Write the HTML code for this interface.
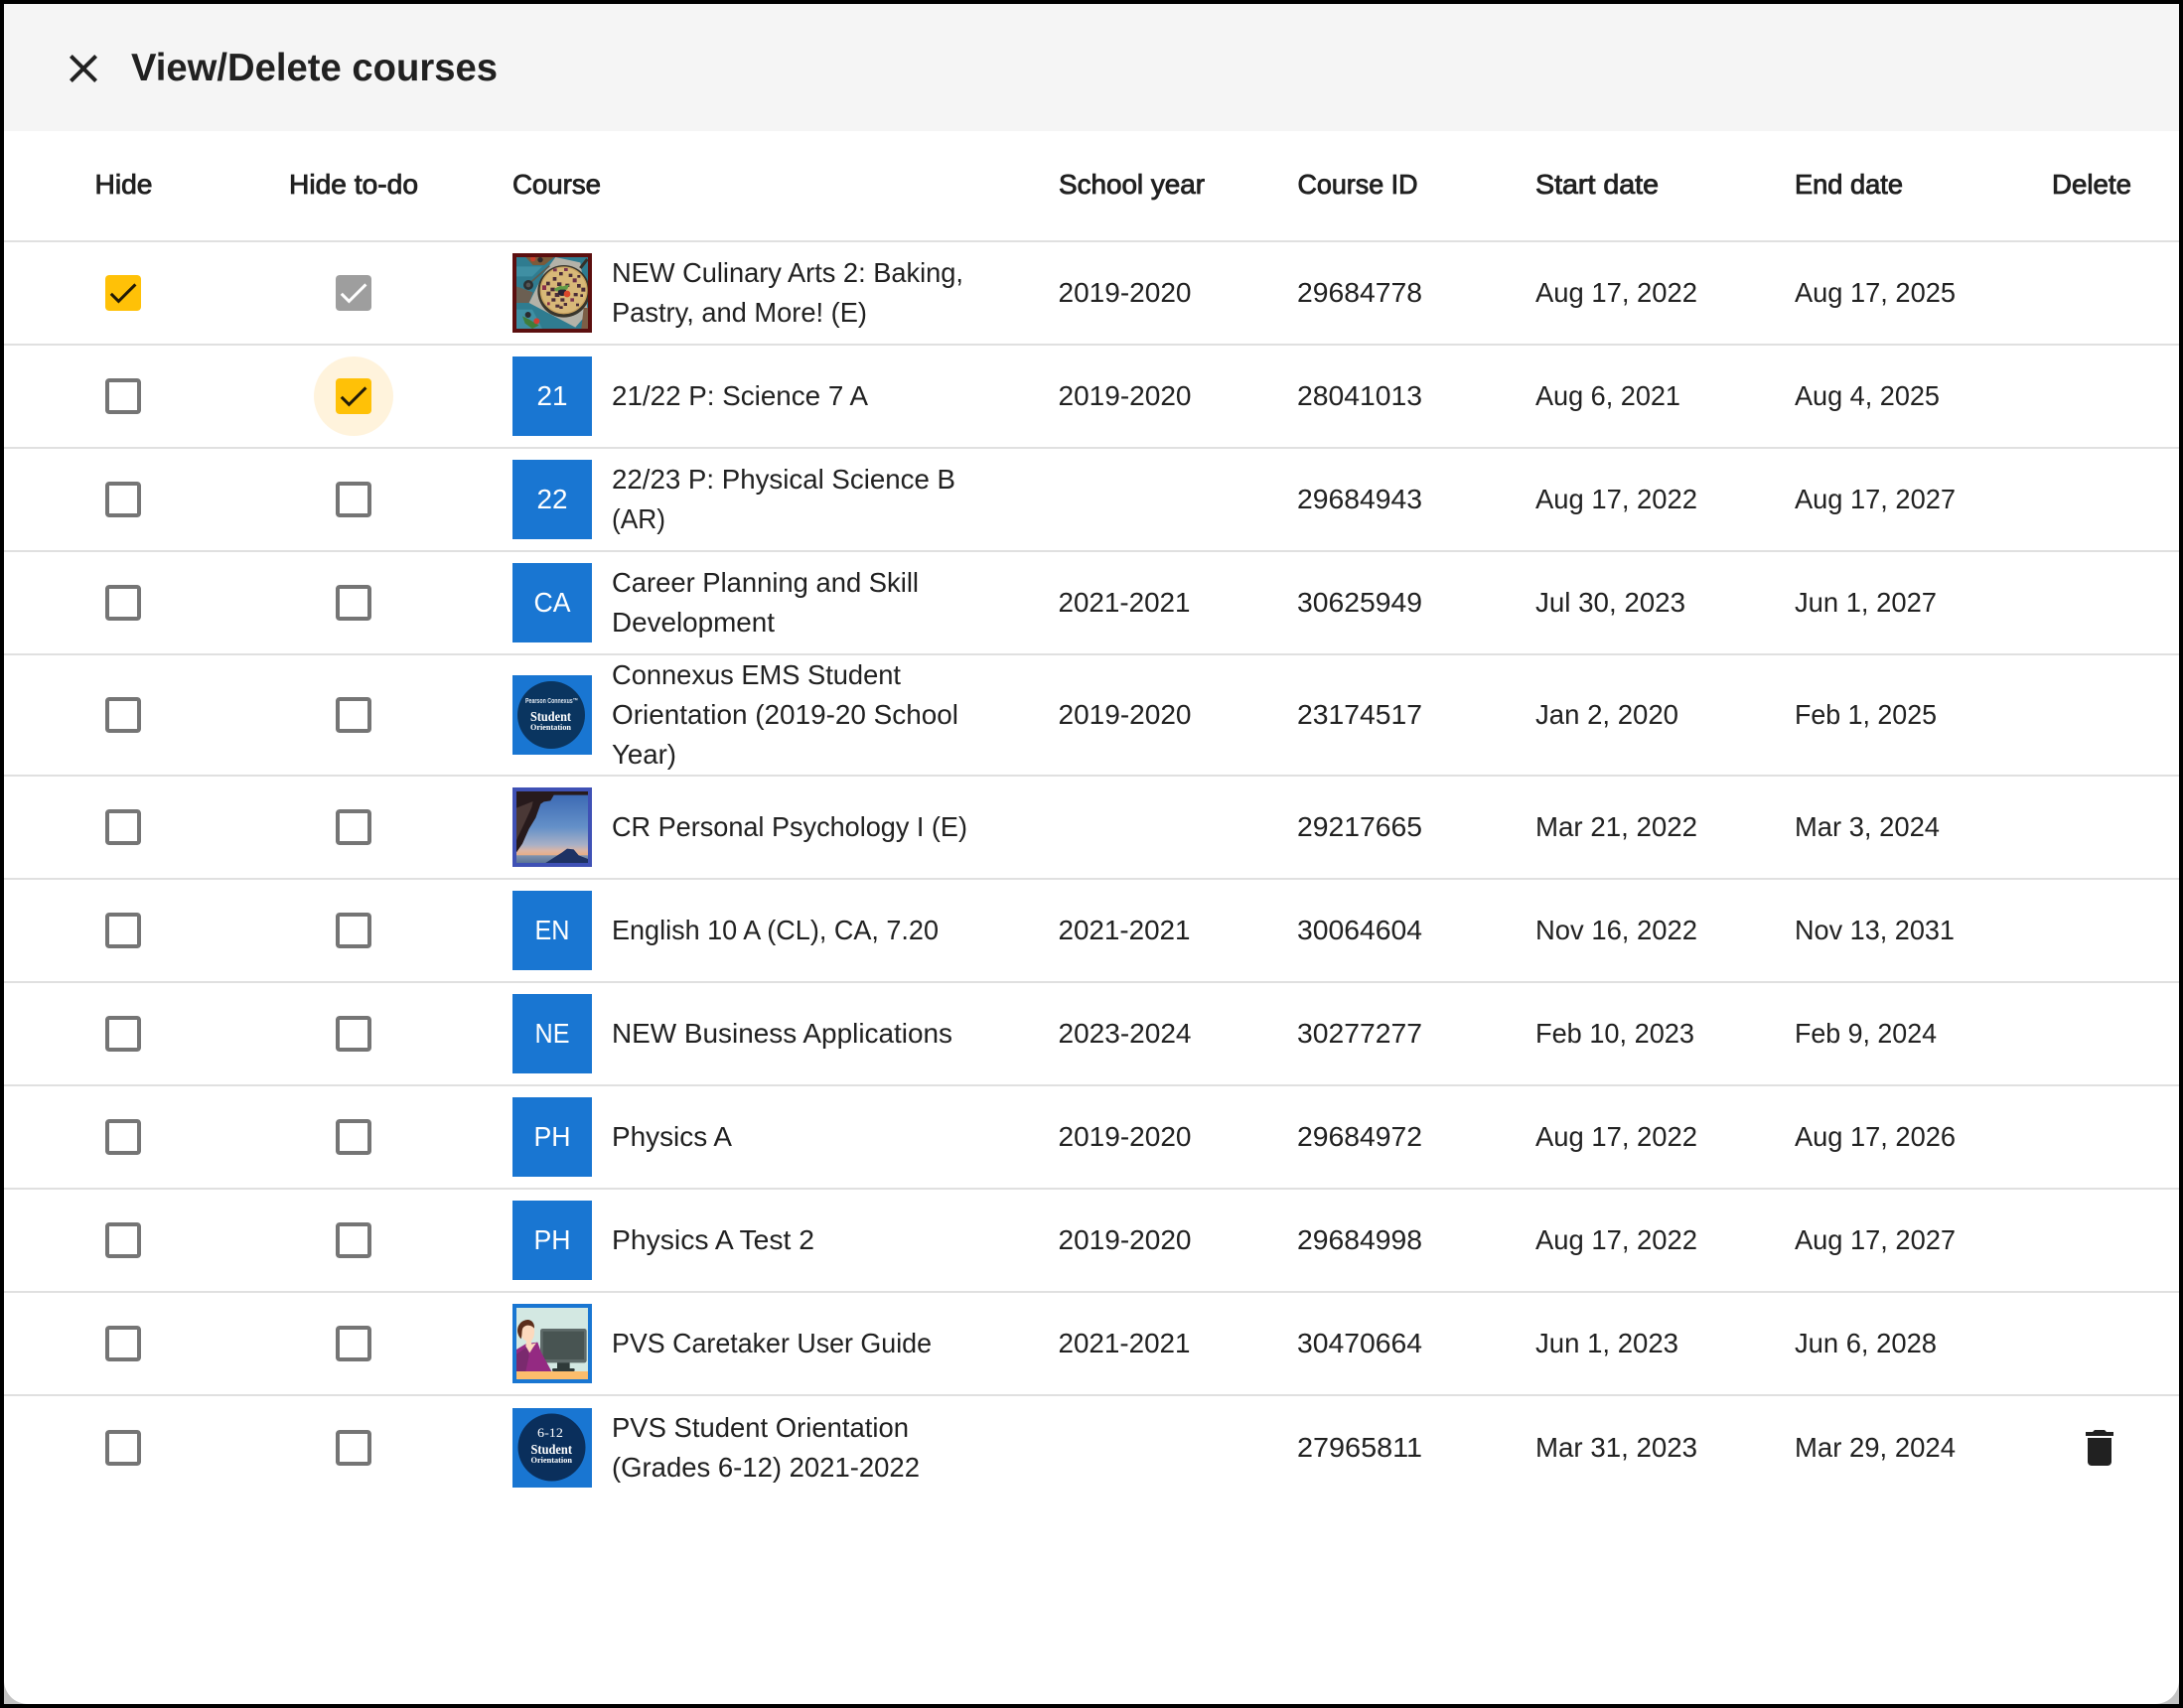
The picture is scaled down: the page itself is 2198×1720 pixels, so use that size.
<!DOCTYPE html>
<html lang="en"><head><meta charset="utf-8"><title>View/Delete courses</title>
<style>html,body{margin:0;padding:0;background:#000}svg{display:block}
text{font-family:"Liberation Sans",sans-serif;fill:#212121}
.t{font-size:28px}.h{font-size:27.5px;stroke:#212121;stroke-width:.85px}
.w{fill:#fff;font-size:28px;text-anchor:middle}
.s{font-family:"Liberation Serif",serif;fill:#fff;font-weight:bold}
</style></head><body>
<svg xmlns="http://www.w3.org/2000/svg" xmlns:xlink="http://www.w3.org/1999/xlink" width="2198" height="1720" viewBox="0 0 2198 1720">
<defs>
<g id="off"><path fill="#757575" d="M19 5v14H5V5h14m0-2H5c-1.1 0-2 .9-2 2v14c0 1.1.9 2 2 2h14c1.1 0 2-.9 2-2V5c0-1.1-.9-2-2-2z" transform="scale(2)"/></g>
<g id="on"><g transform="scale(2)"><path fill="#ffc107" d="M19 3H5c-1.1 0-2 .9-2 2v14c0 1.1.9 2 2 2h14c1.1 0 2-.9 2-2V5c0-1.1-.9-2-2-2z"/><path fill="none" stroke="#211a08" stroke-width="1.5" d="M5.9 12.4L9.7 16.2 18.2 7.7"/></g></g>
<g id="dis"><g transform="scale(2)"><path fill="#9e9e9e" d="M19 3H5c-1.1 0-2 .9-2 2v14c0 1.1.9 2 2 2h14c1.1 0 2-.9 2-2V5c0-1.1-.9-2-2-2z"/><path fill="none" stroke="#fff" stroke-width="1.5" d="M5.9 12.4L9.7 16.2 18.2 7.7"/></g></g>
<linearGradient id="sky" x1="0" y1="0" x2="0" y2="1"><stop offset="0" stop-color="#3866b2"/><stop offset=".5" stop-color="#6490c8"/><stop offset=".75" stop-color="#a9b0c6"/><stop offset=".83" stop-color="#dcb5a4"/><stop offset=".885" stop-color="#e8ae88"/><stop offset=".9" stop-color="#7f92ae"/><stop offset="1" stop-color="#5a7396"/></linearGradient>
</defs>

<rect x="4" y="4" width="2190" height="1712" fill="#c4c4c4"/>
<path fill="#fff" d="M4 4H2194V1692a24 24 0 0 1-24 24H28a24 24 0 0 1-24-24z"/>
<rect x="4" y="4" width="2190" height="128" fill="#f5f5f5"/>

<path fill="#212121" transform="translate(60 45) scale(2)" d="M19 6.41L17.59 5 12 10.59 6.41 5 5 6.41 10.59 12 5 17.59 6.41 19 12 13.41 17.59 19 19 17.59 13.41 12z"/>
<text x="132" y="81" font-size="39" font-weight="bold" textLength="369" lengthAdjust="spacingAndGlyphs">View/Delete courses</text>

<g class="hdr">
<text class="h" x="95.5" y="195" textLength="58" lengthAdjust="spacingAndGlyphs">Hide</text>
<text class="h" x="291" y="195" textLength="130" lengthAdjust="spacingAndGlyphs">Hide to-do</text>
<text class="h" x="516" y="195" textLength="89" lengthAdjust="spacingAndGlyphs">Course</text>
<text class="h" x="1066" y="195" textLength="147" lengthAdjust="spacingAndGlyphs">School year</text>
<text class="h" x="1306.5" y="195" textLength="121" lengthAdjust="spacingAndGlyphs">Course ID</text>
<text class="h" x="1546" y="195" textLength="124" lengthAdjust="spacingAndGlyphs">Start date</text>
<text class="h" x="1807" y="195" textLength="109" lengthAdjust="spacingAndGlyphs">End date</text>
<text class="h" x="2066" y="195" textLength="80" lengthAdjust="spacingAndGlyphs">Delete</text>
</g>

<g fill="#e0e0e0">
<rect x="4" y="242" width="2190" height="2"/><rect x="4" y="346" width="2190" height="2"/><rect x="4" y="450" width="2190" height="2"/><rect x="4" y="554" width="2190" height="2"/><rect x="4" y="658" width="2190" height="2"/><rect x="4" y="780" width="2190" height="2"/><rect x="4" y="884" width="2190" height="2"/><rect x="4" y="988" width="2190" height="2"/><rect x="4" y="1092" width="2190" height="2"/><rect x="4" y="1196" width="2190" height="2"/><rect x="4" y="1300" width="2190" height="2"/><rect x="4" y="1404" width="2190" height="2"/>
</g>

<circle cx="356" cy="399" r="40" fill="#fff3dc"/>
<use xlink:href="#on" href="#on" x="100" y="271"/><use xlink:href="#dis" href="#dis" x="332" y="271"/>
<use xlink:href="#off" href="#off" x="100" y="375"/><use xlink:href="#on" href="#on" x="332" y="375"/>
<use xlink:href="#off" href="#off" x="100" y="479"/><use xlink:href="#off" href="#off" x="332" y="479"/>
<use xlink:href="#off" href="#off" x="100" y="583"/><use xlink:href="#off" href="#off" x="332" y="583"/>
<use xlink:href="#off" href="#off" x="100" y="696"/><use xlink:href="#off" href="#off" x="332" y="696"/>
<use xlink:href="#off" href="#off" x="100" y="809"/><use xlink:href="#off" href="#off" x="332" y="809"/>
<use xlink:href="#off" href="#off" x="100" y="913"/><use xlink:href="#off" href="#off" x="332" y="913"/>
<use xlink:href="#off" href="#off" x="100" y="1017"/><use xlink:href="#off" href="#off" x="332" y="1017"/>
<use xlink:href="#off" href="#off" x="100" y="1121"/><use xlink:href="#off" href="#off" x="332" y="1121"/>
<use xlink:href="#off" href="#off" x="100" y="1225"/><use xlink:href="#off" href="#off" x="332" y="1225"/>
<use xlink:href="#off" href="#off" x="100" y="1329"/><use xlink:href="#off" href="#off" x="332" y="1329"/>
<use xlink:href="#off" href="#off" x="100" y="1434"/><use xlink:href="#off" href="#off" x="332" y="1434"/>

<!-- blue tiles -->
<g fill="#1976d2">
<rect x="516" y="359" width="80" height="80"/><rect x="516" y="463" width="80" height="80"/><rect x="516" y="567" width="80" height="80"/><rect x="516" y="680" width="80" height="80"/><rect x="516" y="897" width="80" height="80"/><rect x="516" y="1001" width="80" height="80"/><rect x="516" y="1105" width="80" height="80"/><rect x="516" y="1209" width="80" height="80"/><rect x="516" y="1313" width="80" height="80"/><rect x="516" y="1418" width="80" height="80"/>
</g>
<text class="w" x="556" y="408" textLength="31" lengthAdjust="spacingAndGlyphs">21</text>
<text class="w" x="556" y="512" textLength="31" lengthAdjust="spacingAndGlyphs">22</text>
<text class="w" x="556" y="616" textLength="37" lengthAdjust="spacingAndGlyphs">CA</text>
<text class="w" x="556" y="946" textLength="35" lengthAdjust="spacingAndGlyphs">EN</text>
<text class="w" x="556" y="1050" textLength="35" lengthAdjust="spacingAndGlyphs">NE</text>
<text class="w" x="556" y="1154" textLength="37" lengthAdjust="spacingAndGlyphs">PH</text>
<text class="w" x="556" y="1258" textLength="37" lengthAdjust="spacingAndGlyphs">PH</text>

<!-- pie thumb -->
<g transform="translate(516 255) scale(.33333)">
<rect width="240" height="240" fill="#5c0f0f"/>
<svg x="12" y="12" width="216" height="216" viewBox="12 12 216 216">
<rect x="12" y="12" width="216" height="216" fill="#2f7c90"/>
<path fill="#3f8fa3" d="M12 40H90L60 70H12zM12 170H60L90 228H12z"/>
<path fill="#6b5f52" d="M12 100L62 118 50 150H12z"/>
<path fill="#7a5a3a" d="M40 12H126L96 36H62z"/>
<circle cx="62" cy="17" r="8" fill="#c9402c"/><circle cx="84" cy="20" r="8" fill="#2b2a2e"/>
<path fill="#b4b2a8" d="M130 12L205 28 228 180 190 224 50 150 95 60z"/>
<path fill="#7c5f46" d="M215 165H228V228H208z"/>
<path stroke="#5e5c50" stroke-width="5" fill="none" d="M55 88L112 38"/>
<circle cx="48" cy="96" r="15" fill="#2c3032"/><circle cx="48" cy="96" r="7" fill="#555"/>
<path stroke="#35322a" stroke-width="9" d="M205 45L226 18"/>
<circle cx="155" cy="115" r="79" fill="#3a362c"/>
<circle cx="155" cy="112" r="70" fill="#d8b878"/>
<circle cx="155" cy="112" r="70" fill="none" stroke="#c9a25f" stroke-width="4"/>
<g fill="#4a2c38">
<rect x="123" y="46" width="11" height="9" fill="#7a3450"/><rect x="141" y="57" width="11" height="10"/><rect x="156" y="45" width="11" height="9" fill="#7a3450"/><rect x="170" y="62" width="11" height="10"/><rect x="196" y="66" width="9" height="8"/>
<rect x="122" y="72" width="11" height="11"/><rect x="102" y="86" width="11" height="11"/><rect x="182" y="76" width="12" height="12" fill="#6a3048"/><rect x="135" y="88" width="13" height="11"/><rect x="160" y="92" width="12" height="10"/><rect x="195" y="93" width="11" height="11"/>
<rect x="90" y="97" width="12" height="14" fill="#8a2f4a"/><rect x="115" y="104" width="13" height="11"/><rect x="208" y="104" width="12" height="12"/><rect x="103" y="116" width="12" height="12"/><rect x="128" y="120" width="14" height="12"/><rect x="185" y="120" width="12" height="10"/><rect x="205" y="124" width="8" height="8"/>
<rect x="118" y="136" width="12" height="10"/><rect x="145" y="136" width="12" height="10"/><rect x="175" y="136" width="11" height="10" fill="#7a3450"/><rect x="105" y="148" width="8" height="9" fill="#8a2f4a"/><rect x="130" y="155" width="12" height="9"/><rect x="155" y="150" width="10" height="9"/><rect x="192" y="152" width="9" height="8"/><rect x="142" y="160" width="10" height="8"/>
</g>
<ellipse cx="150" cy="117" rx="13" ry="12" fill="#272233"/>
<path fill="#5f9a45" d="M125 108L145 98 152 100 172 94 165 110 145 110 132 116z"/>
<circle cx="165" cy="123" r="10" fill="#d9472b"/>
<path fill="#3f7d3a" d="M30 190L50 200 80 218 60 228 38 212z"/>
<circle cx="47" cy="186" r="9" fill="#2b2a2e"/><circle cx="73" cy="205" r="9" fill="#d33d30"/>
</svg>
</g>

<!-- Connexus student orientation -->
<circle cx="555" cy="720" r="34" fill="#0a3560"/>
<text x="529" y="708" font-size="7.5" font-weight="bold" style="fill:#dfe7f0" textLength="53" lengthAdjust="spacingAndGlyphs">Pearson Connexus™</text>
<text class="s" x="534" y="726" font-size="13.5" textLength="41" lengthAdjust="spacingAndGlyphs">Student</text>
<text class="s" x="534" y="735" font-size="8.5" textLength="41" lengthAdjust="spacingAndGlyphs">Orientation</text>

<!-- CR thumb -->
<g transform="translate(516 793) scale(.33333)">
<rect width="240" height="240" fill="#3f51b5"/>
<rect x="12" y="12" width="216" height="216" fill="url(#sky)"/>
<path fill="#271a1c" d="M12 12H228V23H125L115 40 95 43 85 50 70 92 50 125 30 170 12 196z"/>
<path fill="#4a3836" d="M12 62L62 42 58 60 36 108 16 150 12 160z"/>
<path fill="#1e3264" d="M100 228L150 196 165 185 185 187 200 205 228 216V228z"/>
</g>

<!-- Caretaker thumb -->
<g transform="translate(516 1313) scale(.33333)">
<rect width="240" height="240" fill="#1976d2"/>
<rect x="12" y="12" width="216" height="216" fill="#d3e8e2"/>
<rect x="12" y="204" width="216" height="24" fill="#fdbd6c"/>
<rect x="135" y="162" width="38" height="34" fill="#2f3a39"/>
<rect x="120" y="195" width="68" height="9" rx="4" fill="#2f3a39"/>
<rect x="84" y="75" width="140" height="103" rx="7" fill="#5f6b6a"/>
<rect x="92" y="83" width="124" height="85" fill="#485452"/>
<path fill="#942a82" d="M12 138L42 120 76 116 86 145 118 204H12z"/>
<path fill="#7a2a6e" d="M12 152L44 130 50 158 40 204H12z"/>
<path fill="#fcd9bd" d="M22 72C26 55 60 55 66 75 68 95 62 108 56 113L58 122 72 118 62 132 52 148 40 128 42 112C30 108 20 90 22 72z"/>
<path fill="#5c2e1a" d="M16 88C11 64 30 47 48 48 60 50 67 60 66 74 56 62 40 62 32 72 27 80 30 92 26 106 22 102 18 96 16 88z"/>
</g>

<!-- 6-12 thumb -->
<circle cx="555.5" cy="1457.5" r="34" fill="#0a2f5c"/>
<text class="s" x="541" y="1447" font-size="13" style="font-weight:normal" textLength="26" lengthAdjust="spacingAndGlyphs">6-12</text>
<text class="s" x="534.5" y="1464" font-size="13.5" textLength="41.5" lengthAdjust="spacingAndGlyphs">Student</text>
<text class="s" x="534.5" y="1473" font-size="8.5" textLength="41.5" lengthAdjust="spacingAndGlyphs">Orientation</text>

<!-- course names -->
<g class="names">
<text class="t" x="616" y="284" textLength="354" lengthAdjust="spacingAndGlyphs">NEW Culinary Arts 2: Baking,</text>
<text class="t" x="616" y="324" textLength="257" lengthAdjust="spacingAndGlyphs">Pastry, and More! (E)</text>
<text class="t" x="616" y="408" textLength="258" lengthAdjust="spacingAndGlyphs">21/22 P: Science 7 A</text>
<text class="t" x="616" y="492" textLength="346" lengthAdjust="spacingAndGlyphs">22/23 P: Physical Science B</text>
<text class="t" x="616" y="532" textLength="54" lengthAdjust="spacingAndGlyphs">(AR)</text>
<text class="t" x="616" y="596" textLength="309" lengthAdjust="spacingAndGlyphs">Career Planning and Skill</text>
<text class="t" x="616" y="636" textLength="164" lengthAdjust="spacingAndGlyphs">Development</text>
<text class="t" x="616" y="689" textLength="291" lengthAdjust="spacingAndGlyphs">Connexus EMS Student</text>
<text class="t" x="616" y="729" textLength="349" lengthAdjust="spacingAndGlyphs">Orientation (2019-20 School</text>
<text class="t" x="616" y="769" textLength="65" lengthAdjust="spacingAndGlyphs">Year)</text>
<text class="t" x="616" y="842" textLength="358" lengthAdjust="spacingAndGlyphs">CR Personal Psychology I (E)</text>
<text class="t" x="616" y="946" textLength="329" lengthAdjust="spacingAndGlyphs">English 10 A (CL), CA, 7.20</text>
<text class="t" x="616" y="1050" textLength="343" lengthAdjust="spacingAndGlyphs">NEW Business Applications</text>
<text class="t" x="616" y="1154" textLength="121" lengthAdjust="spacingAndGlyphs">Physics A</text>
<text class="t" x="616" y="1258" textLength="204" lengthAdjust="spacingAndGlyphs">Physics A Test 2</text>
<text class="t" x="616" y="1362" textLength="322" lengthAdjust="spacingAndGlyphs">PVS Caretaker User Guide</text>
<text class="t" x="616" y="1447" textLength="299" lengthAdjust="spacingAndGlyphs">PVS Student Orientation</text>
<text class="t" x="616" y="1487" textLength="310" lengthAdjust="spacingAndGlyphs">(Grades 6-12) 2021-2022</text>
</g>

<!-- school year -->
<g class="years">
<text class="t" x="1065.5" y="304" textLength="134" lengthAdjust="spacingAndGlyphs">2019-2020</text>
<text class="t" x="1065.5" y="408" textLength="134" lengthAdjust="spacingAndGlyphs">2019-2020</text>
<text class="t" x="1065.5" y="616" textLength="133" lengthAdjust="spacingAndGlyphs">2021-2021</text>
<text class="t" x="1065.5" y="729" textLength="134" lengthAdjust="spacingAndGlyphs">2019-2020</text>
<text class="t" x="1065.5" y="946" textLength="133" lengthAdjust="spacingAndGlyphs">2021-2021</text>
<text class="t" x="1065.5" y="1050" textLength="134" lengthAdjust="spacingAndGlyphs">2023-2024</text>
<text class="t" x="1065.5" y="1154" textLength="134" lengthAdjust="spacingAndGlyphs">2019-2020</text>
<text class="t" x="1065.5" y="1258" textLength="134" lengthAdjust="spacingAndGlyphs">2019-2020</text>
<text class="t" x="1065.5" y="1362" textLength="133" lengthAdjust="spacingAndGlyphs">2021-2021</text>
</g>

<!-- course ids -->
<g class="ids">
<text class="t" x="1306" y="304" textLength="126" lengthAdjust="spacingAndGlyphs">29684778</text>
<text class="t" x="1306" y="408" textLength="126" lengthAdjust="spacingAndGlyphs">28041013</text>
<text class="t" x="1306" y="512" textLength="126" lengthAdjust="spacingAndGlyphs">29684943</text>
<text class="t" x="1306" y="616" textLength="126" lengthAdjust="spacingAndGlyphs">30625949</text>
<text class="t" x="1306" y="729" textLength="126" lengthAdjust="spacingAndGlyphs">23174517</text>
<text class="t" x="1306" y="842" textLength="126" lengthAdjust="spacingAndGlyphs">29217665</text>
<text class="t" x="1306" y="946" textLength="126" lengthAdjust="spacingAndGlyphs">30064604</text>
<text class="t" x="1306" y="1050" textLength="126" lengthAdjust="spacingAndGlyphs">30277277</text>
<text class="t" x="1306" y="1154" textLength="126" lengthAdjust="spacingAndGlyphs">29684972</text>
<text class="t" x="1306" y="1258" textLength="126" lengthAdjust="spacingAndGlyphs">29684998</text>
<text class="t" x="1306" y="1362" textLength="126" lengthAdjust="spacingAndGlyphs">30470664</text>
<text class="t" x="1306" y="1467" textLength="126" lengthAdjust="spacingAndGlyphs">27965811</text>
</g>

<!-- start dates -->
<g class="start">
<text class="t" x="1546" y="304" textLength="163" lengthAdjust="spacingAndGlyphs">Aug 17, 2022</text>
<text class="t" x="1546" y="408" textLength="146" lengthAdjust="spacingAndGlyphs">Aug 6, 2021</text>
<text class="t" x="1546" y="512" textLength="163" lengthAdjust="spacingAndGlyphs">Aug 17, 2022</text>
<text class="t" x="1546" y="616" textLength="151" lengthAdjust="spacingAndGlyphs">Jul 30, 2023</text>
<text class="t" x="1546" y="729" textLength="144" lengthAdjust="spacingAndGlyphs">Jan 2, 2020</text>
<text class="t" x="1546" y="842" textLength="163" lengthAdjust="spacingAndGlyphs">Mar 21, 2022</text>
<text class="t" x="1546" y="946" textLength="163" lengthAdjust="spacingAndGlyphs">Nov 16, 2022</text>
<text class="t" x="1546" y="1050" textLength="160" lengthAdjust="spacingAndGlyphs">Feb 10, 2023</text>
<text class="t" x="1546" y="1154" textLength="163" lengthAdjust="spacingAndGlyphs">Aug 17, 2022</text>
<text class="t" x="1546" y="1258" textLength="163" lengthAdjust="spacingAndGlyphs">Aug 17, 2022</text>
<text class="t" x="1546" y="1362" textLength="144" lengthAdjust="spacingAndGlyphs">Jun 1, 2023</text>
<text class="t" x="1546" y="1467" textLength="163" lengthAdjust="spacingAndGlyphs">Mar 31, 2023</text>
</g>

<!-- end dates -->
<g class="end">
<text class="t" x="1807" y="304" textLength="162" lengthAdjust="spacingAndGlyphs">Aug 17, 2025</text>
<text class="t" x="1807" y="408" textLength="146" lengthAdjust="spacingAndGlyphs">Aug 4, 2025</text>
<text class="t" x="1807" y="512" textLength="162" lengthAdjust="spacingAndGlyphs">Aug 17, 2027</text>
<text class="t" x="1807" y="616" textLength="143" lengthAdjust="spacingAndGlyphs">Jun 1, 2027</text>
<text class="t" x="1807" y="729" textLength="143" lengthAdjust="spacingAndGlyphs">Feb 1, 2025</text>
<text class="t" x="1807" y="842" textLength="146" lengthAdjust="spacingAndGlyphs">Mar 3, 2024</text>
<text class="t" x="1807" y="946" textLength="161" lengthAdjust="spacingAndGlyphs">Nov 13, 2031</text>
<text class="t" x="1807" y="1050" textLength="143" lengthAdjust="spacingAndGlyphs">Feb 9, 2024</text>
<text class="t" x="1807" y="1154" textLength="162" lengthAdjust="spacingAndGlyphs">Aug 17, 2026</text>
<text class="t" x="1807" y="1258" textLength="162" lengthAdjust="spacingAndGlyphs">Aug 17, 2027</text>
<text class="t" x="1807" y="1362" textLength="143" lengthAdjust="spacingAndGlyphs">Jun 6, 2028</text>
<text class="t" x="1807" y="1467" textLength="162" lengthAdjust="spacingAndGlyphs">Mar 29, 2024</text>
</g>

<path fill="#212121" transform="translate(2090 1434) scale(2)" d="M6 19c0 1.1.9 2 2 2h8c1.1 0 2-.9 2-2V7H6v12zM19 4h-3.5l-1-1h-5l-1 1H5v2h14V4z"/>
</svg>
</body></html>
